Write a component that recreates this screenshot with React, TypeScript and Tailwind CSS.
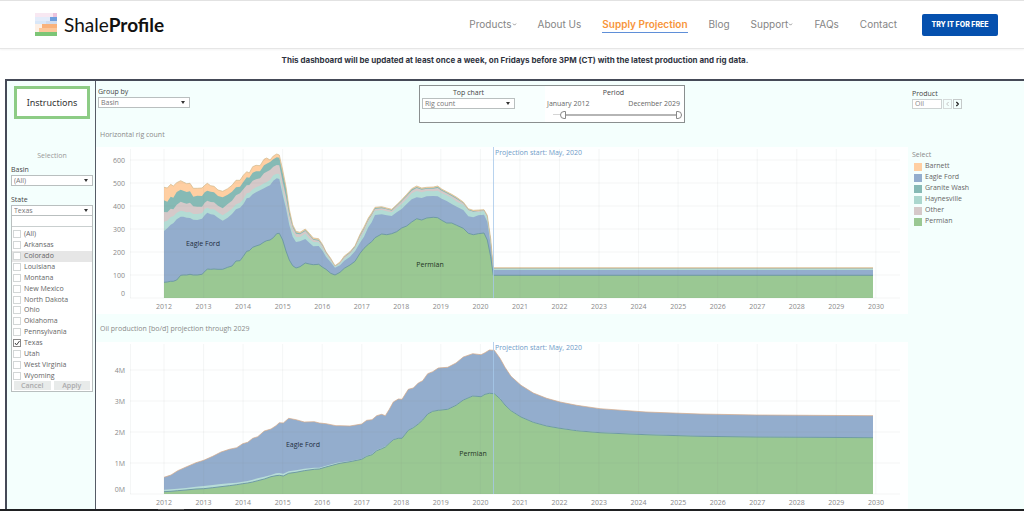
import { useState } from 'react';
import { ChevronDown, ChevronLeft, ChevronRight } from 'lucide-react';

const NAV = [
  { label: 'Products', menu: true },
  { label: 'About Us' },
  { label: 'Supply Projection', active: true },
  { label: 'Blog' },
  { label: 'Support', menu: true },
  { label: 'FAQs' },
  { label: 'Contact' },
];

const STATES = [
  '(All)', 'Arkansas', 'Colorado', 'Louisiana', 'Montana', 'New Mexico', 'North Dakota',
  'Ohio', 'Oklahoma', 'Pennsylvania', 'Texas', 'Utah', 'West Virginia', 'Wyoming',
];

const LEGEND = [
  { name: 'Barnett', color: '#ffcfa2' },
  { name: 'Eagle Ford', color: '#93adcd' },
  { name: 'Granite Wash', color: '#86bab5' },
  { name: 'Haynesville', color: '#abd7ce' },
  { name: 'Other', color: '#d5c9c9' },
  { name: 'Permian', color: '#9ac893' },
];

// Stacked tops in thirds of a chart unit:
// x, Permian, Eagle Ford, Haynesville, Other, Granite Wash, Barnett
const RIGS = [
  [204, 427, 273, 245, 216, 181, 142], [214, 426, 265, 242, 217, 185, 144],
  [224, 424, 254, 231, 206, 170, 133], [232, 424, 250, 229, 208, 173, 138],
  [242, 420, 238, 218, 194, 156, 128], [254, 406, 230, 212, 185, 149, 122],
  [262, 405, 230, 214, 188, 152, 126], [272, 405, 233, 217, 191, 156, 131],
  [282, 403, 234, 216, 188, 154, 130], [292, 405, 239, 222, 199, 170, 145],
  [304, 405, 240, 222, 200, 167, 145], [318, 403, 236, 220, 200, 168, 144],
  [326, 395, 226, 207, 188, 157, 136], [334, 387, 218, 203, 182, 152, 130],
  [344, 388, 223, 208, 186, 155, 137], [354, 387, 224, 208, 187, 157, 139],
  [366, 388, 233, 217, 197, 168, 150], [380, 388, 242, 226, 205, 172, 154],
  [395, 382, 233, 216, 192, 164, 146], [408, 378, 222, 206, 182, 155, 136],
  [420, 363, 208, 193, 166, 142, 121], [432, 362, 203, 188, 160, 140, 121],
  [442, 349, 193, 178, 148, 126, 106], [452, 334, 175, 160, 136, 112, 95],
  [460, 332, 173, 158, 135, 113, 99], [470, 322, 163, 148, 122, 98, 80],
  [480, 318, 157, 142, 118, 94, 76], [492, 314, 151, 137, 115, 94, 77],
  [504, 306, 145, 130, 100, 76, 58], [512, 302, 140, 126, 95, 71, 54],
  [522, 300, 136, 120, 90, 66, 60], [532, 293, 122, 106, 80, 58, 48],
  [542, 281, 115, 101, 75, 52, 42], [550, 280, 117, 102, 76, 53, 45],
  [560, 300, 165, 150, 125, 100, 90], [570, 333, 205, 192, 170, 145, 140],
  [580, 360, 255, 243, 225, 212, 208], [590, 377, 290, 275, 262, 257, 254],
  [600, 384, 306, 291, 281, 277, 274], [612, 380, 304, 291, 283, 280, 277],
  [628, 369, 297, 281, 273, 270, 267], [640, 372, 308, 296, 286, 283, 280],
  [652, 374, 319, 306, 299, 297, 294], [668, 373, 318, 307, 302, 299, 296],
  [680, 382, 333, 326, 318, 316, 314], [690, 388, 350, 343, 338, 336, 335],
  [704, 400, 367, 362, 358, 357, 355], [717, 405, 383, 380, 379, 378, 377],
  [732, 397, 376, 371, 369, 368, 366], [745, 385, 362, 356, 352, 350, 348],
  [762, 375, 350, 343, 339, 337, 335], [777, 364, 334, 325, 321, 319, 317],
  [792, 340, 308, 295, 289, 286, 283], [804, 325, 290, 275, 267, 264, 261],
  [817, 313, 262, 246, 240, 237, 234], [827, 305, 247, 230, 225, 222, 219],
  [837, 293, 225, 212, 207, 204, 202], [857, 282, 223, 210, 205, 202, 200],
  [872, 284, 226, 214, 208, 206, 204], [887, 281, 228, 217, 212, 210, 208],
  [902, 275, 217, 204, 198, 196, 194], [917, 264, 207, 191, 184, 181, 179],
  [932, 258, 192, 177, 169, 166, 163], [947, 246, 178, 160, 152, 148, 146],
  [962, 236, 172, 153, 144, 141, 138], [977, 240, 174, 157, 149, 146, 144],
  [992, 234, 169, 153, 146, 144, 142], [1012, 232, 168, 154, 146, 143, 141],
  [1025, 233, 169, 152, 144, 140, 138], [1037, 241, 176, 160, 152, 149, 147],
  [1052, 249, 183, 166, 160, 157, 155], [1067, 249, 192, 173, 168, 165, 163],
  [1082, 256, 200, 185, 177, 174, 172], [1102, 265, 210, 194, 190, 188, 186],
  [1117, 280, 229, 212, 210, 208, 206], [1132, 284, 232, 217, 215, 213, 211],
  [1147, 281, 226, 216, 213, 212, 210], [1164, 279, 224, 213, 211, 210, 209],
  [1174, 300, 245, 235, 230, 228, 226], [1184, 350, 315, 305, 300, 298, 296],
  [1192, 406, 390, 387, 386, 385, 383], [2331, 406, 390, 387, 386, 385, 383],
];

// x, Permian, other basins, Eagle Ford
const OIL = [
  [204, 515, 509, 472], [225, 514, 508, 465], [245, 512, 506, 452], [270, 510, 504, 441],
  [300, 507, 500, 428], [323, 506, 498, 421], [350, 503, 495, 409], [375, 500, 492, 396],
  [400, 497, 490, 388], [422, 494, 488, 383], [440, 491, 485, 371], [455, 489, 483, 367],
  [470, 486, 479, 355], [485, 482, 475, 350], [505, 477, 470, 333], [525, 470, 465, 327],
  [540, 467, 460, 317], [550, 466, 459, 308], [562, 468, 461, 309], [578, 460, 454, 295],
  [600, 457, 451, 299], [625, 452, 446, 306], [655, 448, 443, 305], [670, 447, 443, 309],
  [690, 441, 437, 311], [720, 433, 429, 317], [732, 430, 427, 317], [762, 425, 423, 318],
  [797, 418, 416, 312], [812, 409, 407, 301], [828, 404, 402, 299], [842, 392, 390, 287],
  [857, 386, 384, 283], [868, 381, 379, 287], [880, 370, 369, 268], [892, 359, 358, 246],
  [907, 355, 354, 237], [918, 355, 354, 238], [937, 331, 330, 208], [952, 323, 322, 204],
  [967, 312, 311, 189], [980, 300, 299, 182], [995, 282, 281, 161], [1010, 274, 273, 155],
  [1027, 271, 270, 144], [1055, 268, 267, 142], [1080, 256, 255, 129], [1102, 240, 239, 111],
  [1130, 228, 227, 101], [1155, 230, 229, 104], [1167, 223, 222, 98], [1180, 220, 219, 90],
  [1195, 221, 220, 91], [1212, 236, 235, 115], [1227, 255, 254, 142], [1245, 272, 271, 169],
  [1275, 291, 290, 196], [1312, 307, 306, 219], [1352, 318, 317, 235], [1392, 325, 324, 246],
  [1442, 332, 331, 256], [1512, 338, 337, 266], [1650, 344, 343, 276], [1812, 349, 348, 282],
  [1982, 351, 350, 285], [2331, 353, 352, 287],
];

const YEARS = Array.from({ length: 19 }, (_, i) => 2012 + i);
const yearX = (year: number) => 68 + (year - 2012) * 39.55;

const line = (rows: number[][], col: number, top: number) =>
  rows.map((r) => `${(r[0] / 3).toFixed(1)},${(r[col] / 3 - top).toFixed(1)}`).join(' ');

type ChartProps = {
  label: string;
  rows: number[][];
  top: number;
  base: number;
  layers: { col: number; color: string }[];
  ticks: { y: number; text: string }[];
  edge: string;
  permianX: number;
  permianY: number;
  eagleX: number;
  eagleY: number;
};

function AreaChart(p: ChartProps) {
  const edgeCol = p.layers[0].col;
  return (
    <svg viewBox="0 0 812 167" role="img" aria-label={p.label} className="block w-full bg-[#feffff]" fontSize="7" fill="#8a8a8a">
      {p.layers.map((l) => (
        <polygon key={l.col} points={`68,${p.base} ${line(p.rows, l.col, p.top)} 777,${p.base}`} fill={l.color} />
      ))}
      <polyline points={line(p.rows, 1, p.top)} fill="none" stroke="#6f9ba5" />
      <polyline points={line(p.rows, edgeCol, p.top)} fill="none" stroke={p.edge} strokeOpacity="0.7" />
      <g stroke="#7a8a90" strokeOpacity="0.08">
        <path d={`M34.5 2V${p.base}M34 ${p.base}H804`} />
        {YEARS.map((y) => <path key={y} d={`M${yearX(y)} 2V${p.base}`} />)}
        {p.ticks.slice(1).map((t) => <path key={t.text} d={`M34 ${t.y}H804`} />)}
      </g>
      <path d={`M397.5 0V${p.base}`} stroke="#a6c8ea" strokeOpacity="0.8" />
      <text x="399" y="8" fill="#6f9bc8">Projection start: May, 2020</text>
      {p.ticks.map((t, i) => (
        <text key={t.text} x="29" y={i ? t.y + 3 : t.y - 2} textAnchor="end">{t.text}</text>
      ))}
      {YEARS.map((y) => (
        <text key={y} x={yearX(y)} y={p.base + 11} textAnchor="middle">{y}</text>
      ))}
      <text x={p.eagleX} y={p.eagleY} textAnchor="middle" fill="#222d40">Eagle Ford</text>
      <text x={p.permianX} y={p.permianY} textAnchor="middle" fill="#223322">Permian</text>
    </svg>
  );
}

function Dropdown({ id, label, value, centered }: { id: string; label: string; value: string; centered?: boolean }) {
  return (
    <div className="w-full">
      <label htmlFor={id} className={`block h-[10px] text-[7px] leading-[10px] text-[#444] ${centered ? 'text-center' : ''}`}>{label}</label>
      <div className="relative">
        <select id={id} defaultValue={value} className="block h-[11px] w-full appearance-none border border-[#b9bfbf] bg-white px-[2px] text-[7px] leading-[9px] text-[#777] outline-none">
          <option>{value}</option>
        </select>
        <span className="pointer-events-none absolute top-[4px] right-[5px] border-x-2 border-t-3 border-x-transparent border-t-[#333]" />
      </div>
    </div>
  );
}

function Logo() {
  return (
    <svg viewBox="0 0 22 23" className="h-[23px] w-[22px]" aria-hidden="true">
      <path d="M0 0H22V4H0z" fill="#f8e8f2" />
      <path d="M18 0h4v4h-4z" fill="#ecc3dc" />
      <path d="M0 4H22V8H0z" fill="#e4ecfa" />
      <path d="M15 4h7v4h-7z" fill="#6f9fdd" />
      <path d="M0 8H22V11H0z" fill="#d9e7f8" />
      <path d="M11 8h11v3H11z" fill="#cfdcf0" />
      <path d="M0 11H22V19H0z" fill="#fdf0e6" />
      <path d="M7 11h15v4H7z" fill="#f9b27c" />
      <path d="M4 15h18v4H4z" fill="#fcc79a" />
      <path d="M0 19H22V23H0z" fill="#7cc576" />
    </svg>
  );
}

const THUMB =
  'pointer-events-none absolute inset-0 m-0 h-[9px] w-full appearance-none bg-transparent [&::-webkit-slider-thumb]:pointer-events-auto [&::-webkit-slider-thumb]:h-[8px] [&::-webkit-slider-thumb]:w-[6px] [&::-webkit-slider-thumb]:appearance-none [&::-webkit-slider-thumb]:border [&::-webkit-slider-thumb]:border-[#888] [&::-webkit-slider-thumb]:bg-white';

export default function App() {
  const [checked, setChecked] = useState<string[]>(['Texas']);
  const [from, setFrom] = useState(6);
  const [to, setTo] = useState(100);

  const toggle = (name: string) =>
    setChecked(checked.includes(name) ? checked.filter((c) => c !== name) : [...checked, name]);

  return (
    <div className="bg-white font-['Open_Sans','Noto_Sans',sans-serif] text-[7px]">
      {/* Header */}
      <header className="flex h-[49px] items-center border-t border-b border-t-[#e2e2e2] border-b-[#e6e6e6] pr-[26px] pl-[35px] shadow-xs">
        <a href="#home" className="flex items-center gap-[7px]">
          <Logo />
          <span className="font-['Lato',sans-serif] text-[19px] leading-6 text-[#111]">Shale<b>Profile</b></span>
        </a>
        <nav className="ml-auto flex items-center gap-[21px] font-['Inter',sans-serif] text-[10px] leading-4 text-[#858585]">
          {NAV.map((n) => (
            <a
              key={n.label}
              href="#nav"
              className={n.active ? 'border-b border-[#5f8fd8] font-semibold text-[#f7953a]' : 'flex items-center border-b border-transparent'}
            >
              {n.label}
              {n.menu && <ChevronDown size={5} strokeWidth={4} />}
            </a>
          ))}
        </nav>
        <button className="ml-[25px] h-[22px] w-[76px] rounded-xs bg-[#0550ae] pt-px font-['Inter',sans-serif] text-[7px] leading-[10px] font-extrabold text-white">
          TRY IT FOR FREE
        </button>
      </header>

      <p className="h-[30px] pt-[5px] pl-[6px] text-center font-['Inter',sans-serif] text-[8px] leading-3 font-bold text-[#30343f]">
        This dashboard will be updated at least once a week, on Fridays before 3PM (CT) with the latest production and rig data.
      </p>

      {/* Dashboard */}
      <main className="ml-[5px] flex border-t-2 border-l-2 border-[#454a57] bg-[#f4fffd]">
        <aside className="w-[89px] shrink-0 border-r border-[#555b66] pt-[5px] pr-[2px] pl-[4px]">
          <button className="ml-[3px] block h-[33px] w-[76px] border-3 border-[#8dcc85] bg-white font-['Noto_Sans',sans-serif] text-[9px] text-[#333]">Instructions</button>
          <h2 className="mt-[32px] text-center leading-[10px] text-[#999]">Selection</h2>
          <div className="mt-[4px]">
            <Dropdown id="basin" label="Basin" value="(All)" />
          </div>
          <div className="mt-[9px]">
            <Dropdown id="state" label="State" value="Texas" />
          </div>
          <div className="border border-t-0 border-[#b9bfbf] bg-white">
            <input aria-label="Search states" className="block h-[11px] w-full border-b border-[#c9cfcf] px-1 outline-none" />
            <div className="flex h-[154px] flex-col pt-[2px]">
              {STATES.map((s) => (
                <label key={s} className={`flex flex-1 items-center gap-[3px] pl-px text-[#666] ${s === 'Colorado' ? 'bg-[#e6e6e6]' : ''}`}>
                  <span className="relative flex h-[8px] w-[8px]">
                    <input
                      type="checkbox"
                      checked={checked.includes(s)}
                      onChange={() => toggle(s)}
                      className="h-[8px] w-[8px] appearance-none border border-[#d2d6d6] bg-white checked:border-[#888]"
                    />
                    {checked.includes(s) && (
                      <svg viewBox="0 0 8 8" className="pointer-events-none absolute inset-0" fill="none" stroke="#444">
                        <path d="M2 4l1.500 2L6.500 2" />
                      </svg>
                    )}
                  </span>
                  <span className="leading-[10px]">{s}</span>
                </label>
              ))}
            </div>
            <div className="flex gap-[3px] px-[2px] pb-px font-semibold text-[#aaa]">
              <button className="h-[9px] flex-1 bg-[#e8ebea] leading-[9px]">Cancel</button>
              <button className="h-[9px] flex-1 bg-[#e8ebea] leading-[9px]">Apply</button>
            </div>
          </div>
        </aside>

        <section className="min-w-0 flex-1">
          <div className="flex h-[47px] items-start pt-[4px] pl-[2px]">
            <div className="w-[98px] pt-[2px] pr-[6px]">
              <Dropdown id="group" label="Group by" value="Basin" />
            </div>
            <div className="mx-auto flex h-[38px] w-[266px] justify-between border border-[#8a8f8f] bg-[#f8fffe] pl-[2px]">
              <div className="w-[93px] pt-[2px]">
                <Dropdown id="top-chart" label="Top chart" value="Rig count" centered />
              </div>
              <div role="group" aria-label="Period" className="w-[139px] bg-white pt-[2px] pr-[2px] text-[#666]">
                <div className="text-center leading-[10px] text-[#444]">Period</div>
                <div className="flex justify-between px-[2px] leading-[12px]">
                  <label htmlFor="from">January 2012</label>
                  <label htmlFor="to">December 2029</label>
                </div>
                <div className="relative ml-[8px] h-[9px]">
                  <div className="flex pt-[4px]">
                    <div className="h-px w-2 bg-[#d5d5d5]" />
                    <div className="h-[2px] flex-1 bg-[#b5b5b5]" />
                  </div>
                  <input id="from" type="range" value={from} onChange={(e) => setFrom(+e.target.value)} className={`${THUMB} [&::-webkit-slider-thumb]:rounded-l-full`} />
                  <input id="to" type="range" value={to} onChange={(e) => setTo(+e.target.value)} className={`${THUMB} [&::-webkit-slider-thumb]:rounded-r-full`} />
                </div>
              </div>
            </div>
          </div>

          <h2 className="h-[19px] pl-[4px] leading-[14px] text-[#8a8a8a]">Horizontal rig count</h2>
          <AreaChart
            label="Horizontal rig count by basin"
            rows={RIGS}
            top={7}
            base={151}
            layers={[
              { col: 6, color: '#ffcfa2' },
              { col: 5, color: '#86bab5' },
              { col: 4, color: '#d5c9c9' },
              { col: 3, color: '#b3dcd5' },
              { col: 2, color: '#93adcd' },
              { col: 1, color: '#9ac893' },
            ]}
            ticks={[0, 100, 200, 300, 400, 500, 600].map((v) => ({ y: 151 - v * 0.23, text: String(v) }))}
            edge="#d2b98c"
            permianX={334}
            permianY={120}
            eagleX={107}
            eagleY={99}
          />

          <h2 className="h-[28px] pt-[8px] pl-[4px] leading-[14px] text-[#8a8a8a]">Oil production [bo/d] projection through 2029</h2>
          <AreaChart
            label="Oil production projection by basin"
            rows={OIL}
            top={22}
            base={152}
            layers={[
              { col: 3, color: '#93adcd' },
              { col: 2, color: '#b7ddd8' },
              { col: 1, color: '#9ac893' },
            ]}
            ticks={[0, 1, 2, 3, 4].map((v) => ({ y: 152 - v * 31, text: `${v}M` }))}
            edge="#d6a987"
            permianX={377}
            permianY={114}
            eagleX={207}
            eagleY={105}
          />
        </section>

        <aside className="w-[116px] shrink-0 pt-[8px] pl-[4px]">
          <label htmlFor="product" className="block leading-[10px] text-[#444]">Product</label>
          <div className="flex gap-px">
            <input id="product" defaultValue="Oil" className="h-[10px] w-[30px] border border-[#ccd2d2] bg-white px-[2px] text-[#888] outline-none" />
            <button aria-label="Previous product" className="flex h-[10px] w-[9px] items-center justify-center border border-[#d5dada] text-[#bbb]"><ChevronLeft size={8} strokeWidth={3} /></button>
            <button aria-label="Next product" className="flex h-[10px] w-[9px] items-center justify-center border border-[#c5caca] text-[#222]"><ChevronRight size={8} strokeWidth={4} /></button>
          </div>
          <h2 className="mt-[40px] leading-[12px] text-[#8a8a8a]">Select</h2>
          <ul className="text-[#666]">
            {LEGEND.map((l) => (
              <li key={l.name} className="flex h-[11px] items-center gap-[3px] pl-[2px]">
                <span className="h-[8px] w-[8px]" style={{ backgroundColor: l.color }} />
                {l.name}
              </li>
            ))}
          </ul>
        </aside>
      </main>
      <footer className="h-[3px] bg-[#1f2022] pl-[158px]">
        <div className="h-px w-[26px] bg-[#555]" />
      </footer>
    </div>
  );
}
